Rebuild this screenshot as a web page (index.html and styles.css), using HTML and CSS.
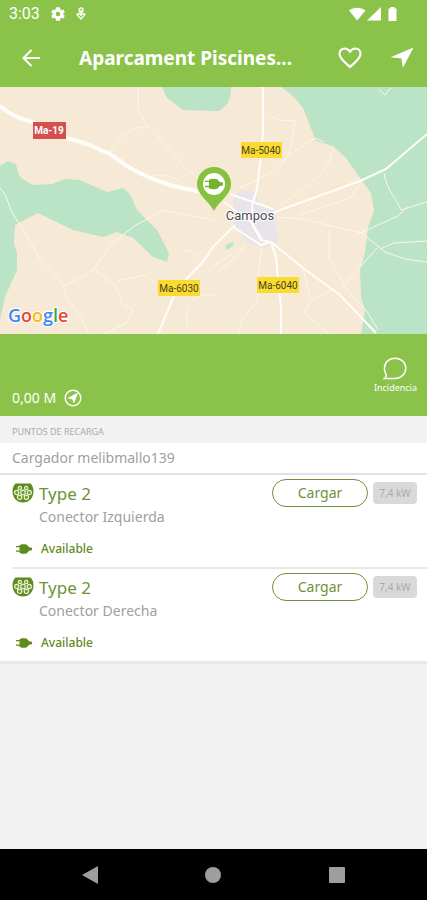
FILE: index.html
```html
<!DOCTYPE html>
<html lang="es">
<head>
<meta charset="utf-8">
<meta name="viewport" content="width=device-width, initial-scale=1">
<title>Aparcament Piscines</title>
<link rel="stylesheet" href="styles.css">
</head>
<body>
<svg class="defs" width="0" height="0" aria-hidden="true">
  <symbol id="plug" viewBox="0 0 16 10">
    <path d="M0 2h5v1.300H0zM0 6.500h5v1.300H0zM3.500 1h1.500V.3h4c2 0 3 1.600 4 3l3 .4v2.600l-3 .4c-1 1.400-2 3-4 3H5V9H3.500z"/>
  </symbol>
  <symbol id="type2" viewBox="0 0 22 20">
    <path fill="#5f8a1c" d="M3.500 .5h15c1.800 1.800 3 4.300 3 7.500C21.500 15 17 19.500 11 19.500S.5 15 .5 8C.5 4.800 1.700 2.300 3.500 .5z"/>
    <g fill="#6f9832" stroke="#e9f3d6" stroke-width="1.200">
      <circle cx="7.800" cy="5" r="1.700"/><circle cx="14.200" cy="5" r="1.700"/>
      <circle cx="4.700" cy="9.500" r="2.100"/><circle cx="11" cy="9.500" r="2.300"/><circle cx="17.300" cy="9.500" r="2.100"/>
      <circle cx="7.600" cy="14.300" r="2.200"/><circle cx="14.400" cy="14.300" r="2.200"/>
    </g>
  </symbol>
</svg>
<div class="screen">
  <header class="top">
    <div class="status">
      <span class="clock">3:03</span>
      <svg width="16" height="16" viewBox="0 0 24 24" fill="#fff"><path fill-rule="evenodd" d="M20 13a8 8 0 0 0 0-2l2.200-1.700-2.200-4-2.700 1.100a7.500 7.500 0 0 0-1.700-1L15 2H9l-.6 3.400a7.500 7.500 0 0 0-1.700 1L4 5.300l-2.200 4L4 11a8 8 0 0 0 0 2l-2.200 1.700 2.200 4 2.700-1.100a7.500 7.500 0 0 0 1.700 1L9 22h6l.6-3.400a7.500 7.500 0 0 0 1.700-1l2.700 1.100 2.200-4zM12 15.500a3.500 3.500 0 1 1 0-7 3.500 3.500 0 0 1 0 7z"/></svg>
      <svg class="fob" width="10" height="14" viewBox="0 0 10 14" fill="none" stroke="#fff" stroke-width="1.300"><circle cx="5" cy="3" r="2"/><path d="M5 3v5M1 7.500l4 4.500 4-4.500-2-1.200-2 2-2-2z"/></svg>
      <span class="grow"></span>
      <svg width="50" height="16" viewBox="0 0 50 16" fill="#fff"><path d="M0 4.500C4.500 .8 12 .8 16.500 4.500L8.200 14.500zM18 14.500L32 1v13.500zM39.500 2.500h2V1h4v1.500h2V15h-8z"/></svg>
    </div>
    <div class="bar">
      <button class="icon" aria-label="Volver"><svg width="20" height="20" viewBox="0 0 20 20" fill="none" stroke="#fff" stroke-width="2"><path d="M19 10H3M10.500 2L2.500 10l8 8"/></svg></button>
      <h1>Aparcament Piscines...</h1>
      <button class="icon" aria-label="Favorito"><svg width="24" height="22" viewBox="0 0 24 22" fill="none" stroke="#fff" stroke-width="2.200"><path d="M12 20C7 15.500 1.500 11.500 1.500 6.700 1.500 3.700 3.700 1.500 6.600 1.500c2.200 0 4.100 1.200 5.400 3.200 1.300-2 3.200-3.200 5.400-3.200 2.900 0 5.100 2.200 5.100 5.200C22.500 11.500 17 15.500 12 20z"/></svg></button>
      <button class="icon" aria-label="Navegar"><svg width="24" height="22" viewBox="0 0 24 22" fill="#fff"><path d="M23.500 .5L12.800 21l-1.300-9.500L.5 10.300z"/></svg></button>
    </div>
  </header>

  <main>
    <svg class="map" viewBox="0 1 427 247" role="img" aria-label="Mapa de Campos">
      <rect y="1" width="427" height="247" fill="#f6ead7"/>
      <g fill="#bae4c5">
        <path d="M0 80L8 75l8 3 2 9 3 5 12 7 19-1 13-5 15 1 27 12 16-4 7 6 7 16 20 20 12 23-2 9-14-5-20-19-16-6-14 5-30-7-35-17-23 12-1 18 3 10v17L5 211 0 234z"/>
        <path d="M162 1l5 11 16 12 31 1h6l8-8 3-10V1z"/>
        <path d="M281 1l12 9 10 12 7 18 6 15 17 5 13 12 14 20 11 15 3 18-6 16-3 26-5 17 1 27 4 13-4 24h66V1z"/>
        <path d="M225 160l7-4 2 3-7 5z"/>
      </g>
      <path fill="#e7e5ea" d="M233 111l8-7 14 2 6 14 14 5 1 17 3 5-2 8-12 7-17-5-14-15z"/>
      <g class="lane">
        <path d="M138 2v22l9 15 25 27 11 14 18 15M110 67c9-14 16-25 37-26M150 91c12-4 22-2 32 6M269 28c10 10 16 5 26 7-3 18-3 34-14 44M238 103l32-16 19-18 26-17 9 4M333 63c-6 26-22 34-52 56M360 98l-10 14-50 17M379 3l6 6 6-7M384 87c2 16 13 27 17 37l26-8M0 102l6 8 5 15M11 125l14 22 15 26 21 22 6 17 15 20 7 16M64 200l28-15 20-28 24-18 15-8 12-7 50 10M93 182l22 17 7 18 11 7-6 12-27 15-10 12M117 195l28-6 8 8M184 165c4-4 15 6 18 11M214 210c-16-6-32 8-26 31M214 190l30-27M213 180l32-20M262 163c-4 15-2 30-5 52l-14 17-5 16M277 131l25 2 60 14 23 19 20 7 22 3M295 131l22-20M358 148l40-18 10-10M380 163l14-6 33-2M329 143v28l16 30 23 26 10 17M343 200l34-38M303 182l8 33-7 12 25 21M311 215l20-11"/>
      </g>
      <g class="road">
        <path d="M263 1v46l-3 30-3 26-5 17 1 19 9 14M427 48l-41 35-26 12-77 28-18 7M230 108l43 15M376 247l-36-38-37-27-32-26-10-2-10-18-27-20M271 156l5 15 2 23 3 27v27M235 139l-22 22-10 15-16 16-14 20-15 36M233 141l28 18 10-3"/>
        <path stroke-width="4" d="M0 20c10 9 20 12 32 16l35 16 20 6 23 10 20 14 20 10 23 8 24 5 17 4"/>
      </g>
      <rect x="33" y="36" width="33" height="17" fill="#d4504f"/>
      <g fill="#fadb2f"><rect x="241" y="56" width="41" height="16"/><rect x="158" y="194" width="42" height="16"/><rect x="257" y="191" width="42" height="16"/></g>
      <g class="shield">
        <text class="light" x="49" y="48">Ma-19</text>
        <text x="261" y="68">Ma-5040</text>
        <text x="179" y="206">Ma-6030</text>
        <text x="278" y="203">Ma-6040</text>
      </g>
      <text class="town" x="250" y="134">Campos</text>
      <path fill="#86c23d" d="M214 125C209 115 197 109 197 98a17 17 0 0 1 34 0c0 11-12 17-17 27z"/>
      <circle cx="214" cy="98" r="11" fill="#fff"/>
      <svg x="205" y="92" width="18" height="12" viewBox="0 0 16 10" fill="#76b12c"><use href="#plug"/></svg>
      <text class="google" x="8" y="236"><tspan fill="#4285f4">G</tspan><tspan fill="#ea4335">o</tspan><tspan fill="#fbbc05">o</tspan><tspan fill="#4285f4">g</tspan><tspan fill="#34a853">l</tspan><tspan fill="#ea4335">e</tspan></text>
    </svg>

    <section class="info">
      <div class="distance">0,00 M
        <svg width="18" height="18" viewBox="0 0 18 18"><circle cx="9" cy="9" r="7.800" fill="none" stroke="#fff" stroke-width="1.400"/><path fill="#fff" d="M14.200 3.600L10 14.500l-1.800-4.300-5-1z"/></svg>
      </div>
      <button class="incident">
        <svg width="24" height="23" viewBox="0 0 24 23" fill="none" stroke="#fff" stroke-width="1.500"><path d="M1.500 21.500c1.500-1 2-2 1.700-4A10 9.800 0 0 1 1.500 11C1.500 5.500 6 1.200 12 1.200S22.800 5.500 22.800 11 18.500 21.500 12 21.500z"/></svg>
        Incidencia
      </button>
    </section>

    <h2 class="section">PUNTOS DE RECARGA</h2>
    <h3 class="charger">Cargador melibmallo139</h3>
    <ul class="list">
      <li>
        <svg width="22" height="20"><use href="#type2"/></svg>
        <div class="body">
          <div class="line"><span class="type">Type 2</span><button class="charge">Cargar</button><span class="power">7,4 kW</span></div>
          <p>Conector Izquierda</p>
        </div>
        <svg class="plug" width="16" height="10"><use href="#plug"/></svg>
        <span class="state">Available</span>
      </li>
      <li>
        <svg width="22" height="20"><use href="#type2"/></svg>
        <div class="body">
          <div class="line"><span class="type">Type 2</span><button class="charge">Cargar</button><span class="power">7,4 kW</span></div>
          <p>Conector Derecha</p>
        </div>
        <svg class="plug" width="16" height="10"><use href="#plug"/></svg>
        <span class="state">Available</span>
      </li>
    </ul>
  </main>

  <nav class="system">
    <button aria-label="Atrás"><svg width="18" height="20" viewBox="0 0 18 20"><path d="M1 10L17 1v18z"/></svg></button>
    <button aria-label="Inicio"><svg width="18" height="18" viewBox="0 0 18 18"><circle cx="9" cy="9" r="8"/></svg></button>
    <button aria-label="Recientes"><svg width="18" height="18" viewBox="0 0 18 18"><rect x="1" y="1" width="16" height="16" rx="1"/></svg></button>
  </nav>
</div>
</body>
</html>
```
FILE: styles.css
```css
* { box-sizing: border-box; }
body, h1, h2, h3, p, ul { margin: 0; padding: 0; }
body { font-family: "Noto Sans", "Open Sans", sans-serif; background: #f2f2f2; }
button { font: inherit; color: inherit; background: none; border: 0; padding: 0; }
svg { display: block; flex: none; }
.defs { position: absolute; }
.screen { display: flex; flex-direction: column; min-height: 100vh; }
main { flex: 1; }

.top { background: #8bc34a; color: #fff; }
.status { display: flex; align-items: center; gap: 10px; height: 28px; padding: 0 28px 0 9px; }
.clock { font: 16px/28px Roboto, sans-serif; }
.grow { flex: 1; }
.bar { display: flex; align-items: center; height: 59px; padding: 0 13px 0 19px; }
.icon { display: flex; align-items: center; justify-content: center; width: 24px; height: 40px; }
h1 + .icon { margin-right: 28px; }
h1 { flex: 1; padding-left: 36px; font-size: 19px; line-height: 28px; font-weight: 700; white-space: nowrap; }

.map { width: 100%; height: auto; }
.lane { fill: none; stroke: #fdf6ea; stroke-width: 1; }
.road { fill: none; stroke: #fffdfa; stroke-width: 2; stroke-linejoin: round; }
.shield { font: 10px Roboto, sans-serif; fill: #4c4420; text-anchor: middle; }
.shield .light { fill: #fff; font-weight: 700; }
.town { font: 13px Roboto, sans-serif; fill: #4b4b50; stroke: #fff; stroke-width: 2px; paint-order: stroke; text-anchor: middle; }
.google { font: 600 18px "Open Sans", sans-serif; stroke: #fff; stroke-width: 2px; paint-order: stroke; }

.info { display: flex; align-items: flex-end; justify-content: space-between; min-height: 82px; padding: 0 10px 7px 12px; background: #8bc34a; color: #fff; }
.distance { display: flex; align-items: center; gap: 8px; font-size: 14px; line-height: 22px; }
.incident { display: flex; flex-direction: column; align-items: center; gap: 1px; padding-bottom: 14px; font-size: 9px; line-height: 14px; }

.section { padding: 4px 12px 0; font-size: 9px; line-height: 23px; font-weight: 400; color: #aaa; }
.charger { padding: 0 12px; background: #fff; border-bottom: 2px solid #e2e2e2; color: #a0a0a0; font-size: 14px; line-height: 30px; font-weight: 400; }
.list { list-style: none; background: #fff; padding-left: 12px; border-bottom: 3px solid #e8e8e8; }
li { display: grid; grid-template-columns: 22px 1fr; column-gap: 5px; padding: 4px 10px 8px 0; }
li > svg { margin-top: 4px; }
li + li { border-top: 2px solid #e8e8e8; }
.line { display: flex; align-items: center; height: 28px; }
.type { flex: 1; color: #6d9238; font-size: 17px; }
.charge { width: 96px; height: 28px; border: 1px solid #6d9238; border-radius: 14px; color: #6d9238; font-size: 14px; line-height: 26px; }
.power { width: 44px; margin-left: 5px; border-radius: 4px; background: #d9d9d9; color: #aaa; font-size: 10px; line-height: 22px; text-align: center; }
li p { color: #a0a0a0; font-size: 14px; line-height: 20px; }
li .plug { margin: 17px 0 0 4px; fill: #5f8a1c; }
.state { margin: 12px 0 0 2px; color: #5f8a1c; font-size: 12px; line-height: 20px; font-weight: 500; }

.system { display: flex; align-items: center; justify-content: space-around; height: 51px; padding: 0 28px; background: #000; fill: #9e9e9e; }
```
